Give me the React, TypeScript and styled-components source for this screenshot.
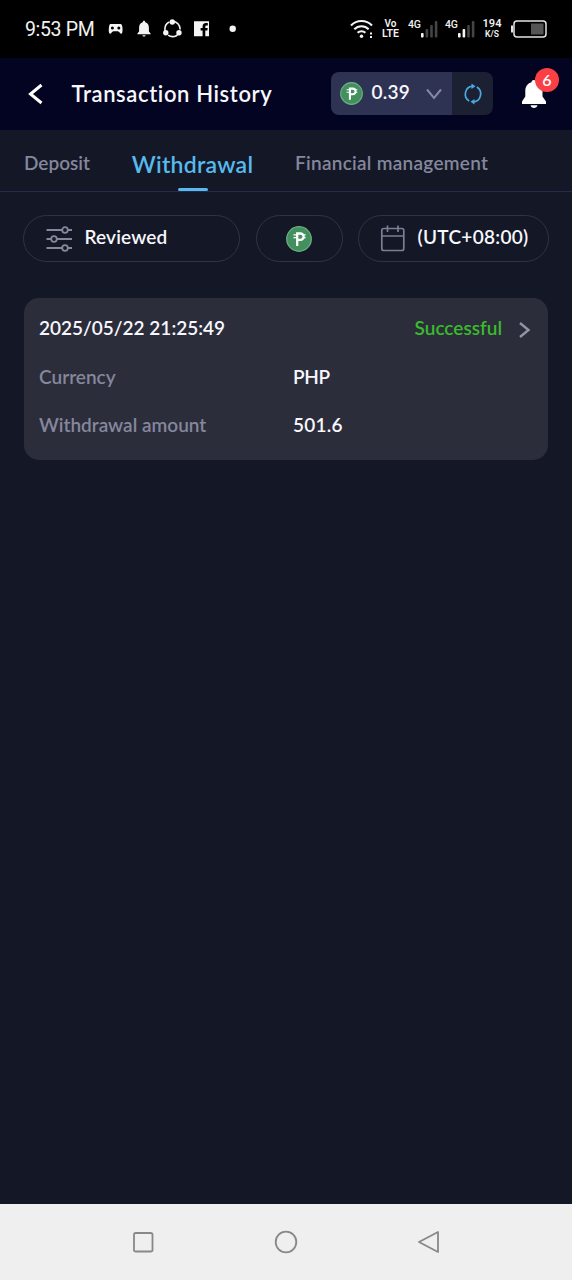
import React from "react";
import styled, { createGlobalStyle } from "styled-components";

const GlobalStyle = createGlobalStyle`
  * { box-sizing: border-box; }
  body { margin: 0; background: #141726; }
  svg { flex: none; }
`;

const Screen = styled.div`
  display: flex;
  flex-direction: column;
  width: 572px;
  height: 1280px;
  background: #141726;
  color: #f7f7fd;
  font-family: Lato, "Noto Sans", sans-serif;
  font-weight: 600;
  overflow: hidden;
`;

const StatusBar = styled.div`
  display: flex;
  align-items: center;
  height: 58px;
  flex: none;
  padding: 0 25px;
  background: #000;
  color: #f2f2f2;
  font-family: Roboto, sans-serif;
  font-weight: 400;
`;

const Clock = styled.span`
  width: 82px;
  font-size: 19.5px;
  letter-spacing: -0.35px;
  white-space: nowrap;
`;

const StatusIcons = styled.svg`
  display: block;
`;

const StatusRight = styled.div`
  display: flex;
  align-items: center;
  margin-left: auto;
`;

const Stacked = styled.div<{ $width: number }>`
  display: flex;
  flex-direction: column;
  align-items: center;
  width: ${(p) => p.$width}px;
  font-weight: 600;
  white-space: nowrap;
`;

const Tiny = styled.span<{ $size: number; $line: number }>`
  font-size: ${(p) => p.$size}px;
  line-height: ${(p) => p.$line}px;
`;

const Signal = styled.div`
  display: flex;
  align-items: flex-start;
  width: 37px;
  height: 20px;
  font-size: 10.5px;
  font-weight: 500;
  line-height: 11px;
  letter-spacing: -0.2px;
`;

const Header = styled.header`
  display: flex;
  align-items: center;
  flex: none;
  height: 72px;
  padding: 0 24px 0 27px;
  background: #030422;
`;

const BackIcon = styled.svg`
  display: block;
  margin-right: 27.5px;
`;

const Text = styled.span<{ $size?: number; $spacing?: number; $color?: string }>`
  font-size: ${(p) => p.$size ?? 19}px;
  line-height: 24px;
  letter-spacing: ${(p) => p.$spacing ?? 0}px;
  color: ${(p) => p.$color ?? "inherit"};
  white-space: nowrap;
`;

const Wallet = styled.div`
  display: flex;
  width: 162px;
  height: 43px;
  margin-left: auto;
  margin-bottom: 1px;
  border-radius: 8px;
  overflow: hidden;
`;

const Balance = styled.div`
  display: flex;
  align-items: center;
  width: 121px;
  padding: 0 9px;
  background: #2f3353;
`;

const Amount = styled.div`
  display: flex;
  flex: 1;
  margin-left: 8.5px;
  padding-bottom: 3px;
`;

const Refresh = styled.div`
  display: flex;
  align-items: center;
  justify-content: center;
  flex: 1;
  background: #1b2133;
`;

const BellButton = styled.div`
  position: relative;
  width: 27px;
  height: 32px;
  margin-left: 28px;
`;

const Badge = styled.span`
  position: absolute;
  top: -10px;
  left: 14px;
  width: 24px;
  height: 24px;
  border-radius: 50%;
  background: #fb4045;
  color: #fff;
  font-size: 16px;
  line-height: 23px;
  text-align: center;
`;

const Tabs = styled.nav`
  display: flex;
  flex: none;
  gap: 42px;
  height: 62px;
  padding: 0 24px;
  border-bottom: 1px solid #272b49;
`;

const Tab = styled.div<{ $width: number; $active?: boolean }>`
  display: flex;
  flex-direction: column;
  align-items: ${(p) => (p.$active ? "center" : "flex-start")};
  justify-content: space-between;
  flex: none;
  width: ${(p) => p.$width}px;
  height: 61px;
  padding-top: ${(p) => (p.$active ? 22 : 21)}px;
`;

const Underline = styled.div`
  width: 30px;
  height: 3px;
  border-radius: 2px;
  background: #58b9ed;
`;

const Filters = styled.div`
  display: flex;
  flex: none;
  justify-content: space-between;
  padding: 23px 23px 0;
`;

const Pill = styled.div<{ $width: number; $pad?: number; $gap?: number }>`
  display: flex;
  align-items: center;
  justify-content: ${(p) => (p.$pad ? "flex-start" : "center")};
  gap: ${(p) => p.$gap ?? 12}px;
  width: ${(p) => p.$width}px;
  height: 47px;
  padding: 0 0 0 ${(p) => p.$pad ?? 0}px;
  border: 1px solid #303346;
  border-radius: 24px;
`;

const PillLabel = styled.div`
  display: flex;
  padding-bottom: 3px;
`;

const Card = styled.section`
  display: flex;
  flex-direction: column;
  gap: 24.5px;
  flex: none;
  height: 162px;
  margin: 36px 24px 0;
  padding: 18px 15px 0;
  border-radius: 15px;
  background: #2c2d3b;
`;

const CardHead = styled.div`
  display: flex;
  align-items: center;
  height: 24px;
`;

const Status = styled.div`
  display: flex;
  align-items: center;
  gap: 15px;
  margin-left: auto;
`;

const Chevron = styled.svg`
  display: block;
  margin-top: 4px;
`;

const CardRow = styled.div`
  display: grid;
  grid-template-columns: 254px 1fr;
  height: 24px;
`;

const SystemNav = styled.footer`
  display: flex;
  align-items: center;
  justify-content: space-between;
  flex: none;
  height: 76px;
  margin-top: auto;
  padding: 0 131px;
  background: #efefef;
`;

const Peso = ({ size }: { size: number }) => (
  <svg width={size} height={size} viewBox="0 0 26 26">
    <circle cx="13" cy="13" r="12.3" fill="#43905f" stroke="#6caf83" strokeWidth="1.2" />
    <path d="M11.2 20V7.500h3.200a3.200 3.200 0 0 1 0 6.400h-3.200" fill="none" stroke="#fff" strokeWidth="2.300" />
    <path d="M7.500 8.800h3M7.500 11.600h3M17 8.800h2.600M17 11.600h2.600" stroke="#fff" strokeWidth="1.300" />
  </svg>
);

const SignalBars = ({ active }: { active: number }) => (
  <svg width="18" height="20" viewBox="0 0 18 20">
    {[0, 1, 2, 3].map((i) => (
      <rect
        key={i}
        x={i * 4.6}
        y={14 - i * 4}
        width="2.6"
        height={4.5 + i * 4}
        rx="0.8"
        fill={i < active ? "#f5f5f5" : "#444"}
      />
    ))}
  </svg>
);

const muted = "#85879c";

export default function App() {
  return (
    <Screen>
      <GlobalStyle />
      <StatusBar>
        <Clock>9:53 PM</Clock>
        <StatusIcons width="132" height="24" viewBox="107 17 132 24" fill="#f4f4f4">
          <path d="M110.500 24h10.300q1.600.6 1.700 4.500.2 4.800-1.100 5.300c-1.300.2-2.100-2.600-3.500-2.600h-4.500c-1.400 0-2.200 2.800-3.500 2.600-1.300-.5-1.300-3.500-1-6q.3-3.600 1.600-3.800z" />
          <circle cx="112.400" cy="28" r="1.500" fill="#000" />
          <circle cx="118.800" cy="28" r="1.500" fill="#000" />
          <path d="M144 20.700c.9 0 1.200.6 1.300 1.500 2.500.8 3.600 2.900 3.600 5.300v4l1.700 2v.8h-13.200v-.8l1.700-2v-4c0-2.400 1.100-4.500 3.600-5.300.1-.9.400-1.500 1.300-1.500zM142.300 35.300h3.400c-.3 1.700-3.100 1.700-3.400 0z" />
          <circle cx="172.500" cy="29" r="7.600" fill="none" stroke="#f4f4f4" strokeWidth="1.600" strokeDasharray="12.500 3.420" strokeDashoffset="-4" />
          <circle cx="172.300" cy="22" r="2.700" />
          <circle cx="165.800" cy="32.700" r="2.700" />
          <circle cx="179" cy="32.700" r="2.700" />
          <path d="M194 21.200h15v15h-3.700v-5.700h2.100l.3-2.500h-2.400v-1.400c0-.8.400-1.200 1.300-1.200h1.200v-2.300h-1.900c-2.200 0-3.300 1.300-3.300 3.200V28h-2v2.500h2v5.700H194z" />
          <circle cx="232.700" cy="28.700" r="3.200" />
        </StatusIcons>
        <StatusRight>
          <StatusIcons width="24" height="22" viewBox="0 0 24 22" fill="none" stroke="#f4f4f4" strokeWidth="2.100">
            <path d="M2 7.500a14.500 14.500 0 0 1 21 0M5.300 11.300a10 10 0 0 1 14.400 0M8.600 14.800a5.500 5.500 0 0 1 7.800 0" />
            <circle cx="12.500" cy="18.200" r="1.700" fill="#f4f4f4" stroke="none" />
            <path d="M22 14.500v2M22 18v2" strokeWidth="2" />
          </StatusIcons>
          <Stacked $width={35}>
            <Tiny $size={10} $line={10}>Vo</Tiny>
            <Tiny $size={10.5} $line={10}>LTE</Tiny>
          </Stacked>
          <Signal>4G<SignalBars active={1} /></Signal>
          <Signal>4G<SignalBars active={2} /></Signal>
          <Stacked $width={20}>
            <Tiny $size={11} $line={10.5}>194</Tiny>
            <Tiny $size={8.5} $line={9}>K/S</Tiny>
          </Stacked>
          <StatusIcons width="45" height="20" viewBox="0 0 45 20">
            <rect x="12" y="2" width="32" height="16" rx="3" fill="none" stroke="#e4e4e4" strokeWidth="1.500" />
            <path d="M10 6.500v7" stroke="#e4e4e4" strokeWidth="2" />
            <rect x="29" y="4.500" width="12.500" height="11" fill="#555" />
          </StatusIcons>
        </StatusRight>
      </StatusBar>

      <Header>
        <BackIcon width="17" height="22" viewBox="0 0 17 22" fill="none">
          <path d="M14.500 2 3.500 11l11 9" stroke="#fff" strokeWidth="3" />
        </BackIcon>
        <Text $size={22} $spacing={0.62}>Transaction History</Text>
        <Wallet>
          <Balance>
            <Peso size={23} />
            <Amount><Text $spacing={0.2}>0.39</Text></Amount>
            <svg width="18" height="12" viewBox="0 0 18 12" fill="none">
              <path d="m2 1.500 7 8.500 7-8.500" stroke="#8587a5" strokeWidth="2" />
            </svg>
          </Balance>
          <Refresh>
            <svg width="20" height="22" viewBox="0 0 20 22" fill="none" stroke="#4ba9e0" strokeWidth="1.700">
              <path d="M6.200 18A8 8 0 0 1 9.500 3.200M13.800 4A8 8 0 0 1 10.500 18.800" />
              <path d="m8.500.500 4 2.800-4 2.700zM11.500 21.500l-4-2.800 4-2.700z" fill="#4ba9e0" stroke="none" />
            </svg>
          </Refresh>
        </Wallet>
        <BellButton>
          <svg width="27" height="32" viewBox="0 0 27 32" fill="#fff">
            <path d="M12.800 2c1.500 0 2.400 1 2.400 2.300 4.300 1.100 6.300 4.700 6.300 8.700v5.500l3.500 5V26H1v-2.500l3.300-5V13c0-4 2-7.600 6.200-8.700C10.500 3 11.300 2 12.800 2zM9.500 27.300h7c-.8 3.600-6.200 3.600-7 0z" />
          </svg>
          <Badge>6</Badge>
        </BellButton>
      </Header>

      <Tabs>
        <Tab $width={66}><Text $color={muted}>Deposit</Text></Tab>
        <Tab $width={121} $active>
          <Text $size={23} $spacing={0.25} $color="#58b9ed">Withdrawal</Text>
          <Underline />
        </Tab>
        <Tab $width={193}><Text $color={muted} $spacing={0.27}>Financial management</Text></Tab>
      </Tabs>

      <Filters>
        <Pill $width={217} $pad={22} $gap={11.5}>
          <svg width="27" height="26" viewBox="0 0 27 26" fill="none" stroke="#85879c" strokeWidth="1.800">
            <path d="M.5 4H16M22 4h4M.5 13H5M11 13h15M.5 22H16M22 22h4" />
            <circle cx="19" cy="4" r="2.800" />
            <circle cx="8" cy="13" r="2.800" />
            <circle cx="19" cy="22" r="2.800" />
          </svg>
          <PillLabel><Text $spacing={0.15}>Reviewed</Text></PillLabel>
        </Pill>
        <Pill $width={87}><Peso size={26} /></Pill>
        <Pill $width={191} $pad={21} $gap={11.5}>
          <svg width="26" height="28" viewBox="0 0 26 28" fill="none" stroke="#7c7e93" strokeWidth="1.700">
            <rect x="1.800" y="3.500" width="22" height="22" rx="2" />
            <path d="M2 11h22M7.500.5V7M18 .5V7" />
          </svg>
          <PillLabel><Text $spacing={0.3}>(UTC+08:00)</Text></PillLabel>
        </Pill>
      </Filters>

      <Card>
        <CardHead>
          <Text>2025/05/22 21:25:49</Text>
          <Status>
            <Text $color="#3abb2b">Successful</Text>
            <Chevron width="16" height="18" viewBox="0 0 16 18" fill="none">
              <path d="m3 2 8.500 7L3 16" stroke="#9293a5" strokeWidth="2.400" />
            </Chevron>
          </Status>
        </CardHead>
        <CardRow><Text $color={muted}>Currency</Text><Text $spacing={-0.3}>PHP</Text></CardRow>
        <CardRow><Text $color={muted}>Withdrawal amount</Text><Text $spacing={0.25}>501.6</Text></CardRow>
      </Card>

      <SystemNav>
        <svg width="24" height="24" viewBox="0 0 24 24" fill="none" stroke="#888" strokeWidth="1.800">
          <rect x="3" y="3" width="18.500" height="18.500" rx="1.800" />
        </svg>
        <svg width="24" height="24" viewBox="0 0 24 24" fill="none" stroke="#888" strokeWidth="1.800">
          <circle cx="12" cy="12" r="10.300" />
        </svg>
        <svg width="24" height="24" viewBox="0 0 24 24" fill="none" stroke="#888" strokeWidth="1.800" strokeLinejoin="round">
          <path d="M21 2v20L2 12z" />
        </svg>
      </SystemNav>
    </Screen>
  );
}
